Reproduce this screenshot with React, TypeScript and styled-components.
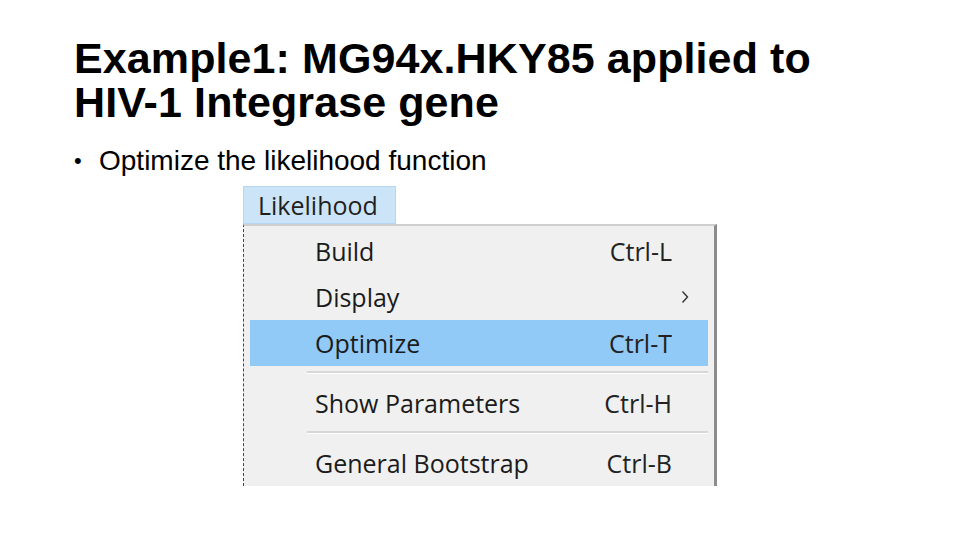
import React from 'react';
import styled, { createGlobalStyle } from 'styled-components';

const GlobalStyle = createGlobalStyle`
  html, body {
    margin: 0;
    padding: 0;
    background: #ffffff;
  }
`;

type Item = { label: string; shortcut?: string; submenu?: boolean; active?: boolean; separatorBefore?: boolean };

const items: Item[] = [
  { label: 'Build', shortcut: 'Ctrl-L' },
  { label: 'Display', submenu: true },
  { label: 'Optimize', shortcut: 'Ctrl-T', active: true },
  { label: 'Show Parameters', shortcut: 'Ctrl-H', separatorBefore: true },
  { label: 'General Bootstrap', shortcut: 'Ctrl-B', separatorBefore: true },
];

const App: React.FC = () => {
  return (
    <Slide>
      <GlobalStyle />
      <Title>
        Example1: MG94x.HKY85 applied to
        <br />
        HIV-1 Integrase gene
      </Title>
      <Bullets>
        <Bullet>Optimize the likelihood function</Bullet>
      </Bullets>
      <MenuShot>
        <MenuHeader>Likelihood</MenuHeader>
        <MenuPanel>
          {items.map((item) => (
            <React.Fragment key={item.label}>
              {item.separatorBefore && <Separator />}
              <MenuRow $active={item.active}>
                <RowLabel>{item.label}</RowLabel>
                {item.shortcut && <Shortcut>{item.shortcut}</Shortcut>}
                {item.submenu && (
                  <Arrow viewBox="0 0 8 14">
                    <path d="M1.5 1.5 L6.5 7 L1.5 12.5" fill="none" stroke="#333" strokeWidth="1.4" />
                  </Arrow>
                )}
              </MenuRow>
            </React.Fragment>
          ))}
        </MenuPanel>
      </MenuShot>
    </Slide>
  );
};

const Slide = styled.div`
  width: 960px;
  height: 540px;
  box-sizing: border-box;
  padding: 36px 0 0 74px;
  display: flex;
  flex-direction: column;
  background: #ffffff;
  overflow: hidden;
`;

const Title = styled.h1`
  margin: 0;
  font-family: 'Liberation Sans', Arial, sans-serif;
  font-weight: 700;
  font-size: 43px;
  line-height: 44px;
  letter-spacing: 0.1px;
  color: #000000;
`;

const Bullets = styled.ul`
  margin: 21px 0 0 0;
  padding: 0;
  list-style: none;
`;

const Bullet = styled.li`
  position: relative;
  padding-left: 25px;
  font-family: 'Liberation Sans', Arial, sans-serif;
  font-size: 28px;
  line-height: 32px;
  color: #000000;

  &::before {
    content: '•';
    position: absolute;
    left: 0;
    top: 0;
    font-size: 22px;
  }
`;

const MenuShot = styled.div`
  margin: 9px 0 0 169px;
  width: 474px;
  display: flex;
  flex-direction: column;
  font-family: 'Open Sans', 'Noto Sans', sans-serif;
  color: #1b1b1b;
`;

const MenuHeader = styled.div`
  width: 153px;
  height: 38px;
  box-sizing: border-box;
  padding-left: 14px;
  display: flex;
  align-items: center;
  background: #cce4f7;
  border: 1px solid #b6d6f2;
  font-size: 25px;
  color: #1f1f1f;
`;

const MenuPanel = styled.div`
  box-sizing: border-box;
  height: 262px;
  padding: 2px 6px 0 6px;
  background: #f0f0f0;
  border-top: 2px solid #cfcfcf;
  border-left: 1px dashed #444444;
  border-right: 3px solid #8c8c8c;
  display: flex;
  flex-direction: column;
`;

const MenuRow = styled.div<{ $active?: boolean }>`
  height: 46px;
  flex: none;
  display: flex;
  align-items: center;
  padding: 0 36px 0 65px;
  background: ${(p) => (p.$active ? '#91c9f7' : 'transparent')};
  font-size: 25px;
`;

const RowLabel = styled.span`
  flex: 1;
`;

const Shortcut = styled.span`
  color: #222222;
`;

const Arrow = styled.svg`
  width: 8px;
  height: 14px;
  margin-right: -17px;
`;

const Separator = styled.div`
  height: 2px;
  margin: 5px 0 6px 57px;
  background: #d7d7d7;
  border-bottom: 1px solid #ffffff;
`;

export default App;
